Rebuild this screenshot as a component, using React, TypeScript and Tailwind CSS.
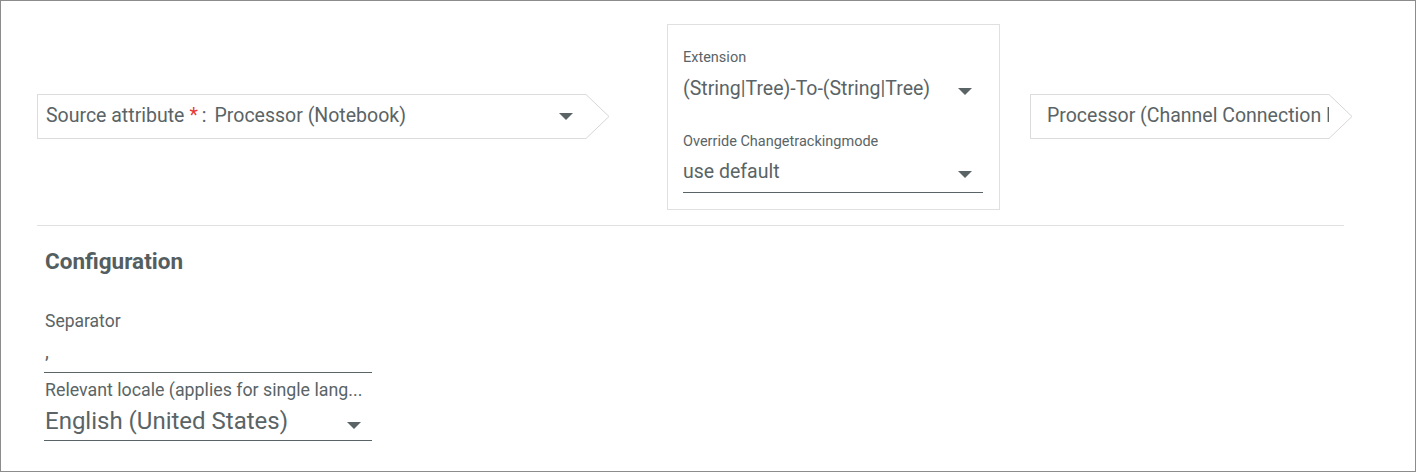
import React from 'react';

const Caret = () => (
  <span className="inline-block w-0 h-0 border-l-[7px] border-r-[7px] border-t-[7px] border-l-transparent border-r-transparent border-t-[#5a6466]" />
);

const ArrowBox: React.FC<{ width: number; children: React.ReactNode }> = ({ width, children }) => (
  <div className="flex h-[45px] shrink-0" style={{ width }}>
    <div className="flex-1 min-w-0 flex items-center border-y border-l border-[#dcdcdc] bg-white overflow-hidden">
      {children}
    </div>
    <svg width="24" height="45" viewBox="0 0 24 45" className="shrink-0">
      <polyline points="0,0.5 23,22.5 0,44.5" fill="white" stroke="#d6d6d6" strokeWidth="1" />
    </svg>
  </div>
);

export default function App() {
  return (
    <div
      className="w-[1416px] h-[472px] border border-[#8c8c8c] bg-white text-[#5a6466] overflow-hidden"
      style={{ fontFamily: 'Roboto, "Liberation Sans", sans-serif' }}
    >
      <div className="pl-[36px]">
        {/* top row */}
        <div className="flex items-center pt-[23px]">
          <div className="-mt-[2px]">
            <ArrowBox width={573}>
              <div className="flex items-center w-full pl-[8px] pr-[13px] text-[19.5px] leading-[24px]">
                <span>Source attribute</span>
                <span className="text-[#e53935] ml-[5px]">*</span>
                <span className="ml-[4px]">:</span>
                <span className="ml-[8px] flex-1">Processor (Notebook)</span>
                <Caret />
              </div>
            </ArrowBox>
          </div>

          <div className="ml-[57px] w-[333px] border border-[#e0e0e0] pl-[15px] pr-[16px] pt-[25px] pb-[16px]">
            <div className="text-[14.5px] leading-[16px]">Extension</div>
            <div className="mt-[11px] flex items-center justify-between text-[19.5px] leading-[24px]">
              <span>(String|Tree)-To-(String|Tree)</span>
              <span className="mr-[11px]"><Caret /></span>
            </div>
            <div className="mt-[33px] text-[14.5px] leading-[16px]">Override Changetrackingmode</div>
            <div className="mt-[10px] flex items-center justify-between text-[19.5px] leading-[24px] pb-[8px] border-b border-[#5a6466]">
              <span>use default</span>
              <span className="mr-[11px]"><Caret /></span>
            </div>
          </div>

          <div className="ml-[30px] -mt-[2px]">
            <ArrowBox width={323}>
              <div className="pl-[16px] text-[19.5px] leading-[24px] whitespace-nowrap">
                Processor (Channel Connection Endpoint)
              </div>
            </ArrowBox>
          </div>
        </div>

        <div className="mt-[15px] w-[1307px] border-t border-[#e0e0e0]" />

        {/* configuration */}
        <div className="pl-[7px]">
          <h2 className="mt-[21px] pl-[1px] text-[22.5px] leading-[28px] font-bold text-[#545e60]">Configuration</h2>

          <div className="mt-[36px] pl-[1px] text-[17.5px] leading-[20px]">Separator</div>
          <div className="w-[328px] pl-[1px] pt-[9px] pb-[8px] text-[19.5px] leading-[24px] border-b border-[#5a6466]">,</div>

          <div className="mt-[7px] pl-[1px] text-[17.8px] leading-[20px] w-[328px] whitespace-nowrap overflow-hidden">
            Relevant locale (applies for single lang...
          </div>
          <div className="mt-[7px] pl-[1px] w-[328px] flex items-center justify-between pb-[5px] text-[24px] leading-[28px] border-b border-[#5a6466]">
            <span>English (United States)</span>
            <span className="mr-[11px]"><Caret /></span>
          </div>
        </div>
      </div>
    </div>
  );
}
